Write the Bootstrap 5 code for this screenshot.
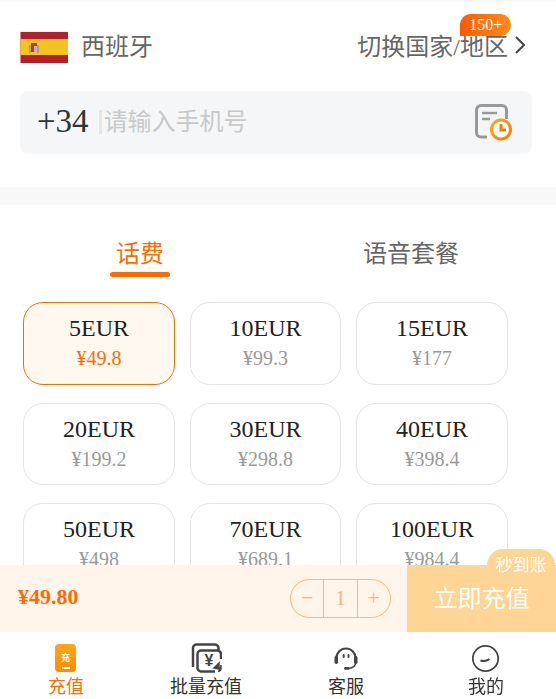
<!DOCTYPE html>
<html lang="zh-CN">
<head>
    <meta charset="UTF-8">
    <meta name="viewport" content="width=device-width, initial-scale=1.0">
    <title>话费充值</title>
    <link href="https://cdn.jsdelivr.net/npm/bootstrap@5.3.0/dist/css/bootstrap.min.css" rel="stylesheet">
    <style>
        html, body {
            height: 100%;
            overflow: hidden;
        }

        body {
            font-family: "Liberation Serif", "Noto Sans CJK SC", serif;
            background-color: #fff;
            color: #222;
            border-top: 2px solid #f8f8f8;
        }

        .top-row {
            height: 89px;
            padding: 0 31px 0 20px;
        }

        .flag-box {
            width: 48px;
            height: 33px;
            margin: 2px 13px 0 0;
        }

        .country-name, .switch-link {
            font-size: 24px;
            color: #666;
        }

        .switch-wrap {
            position: relative;
        }

        .chev-icon {
            margin: -4px 0 0 5px;
        }

        .count-tag {
            position: absolute;
            left: 103px;
            top: -14.5px;
            width: 51px;
            height: 22px;
            line-height: 22px;
            font-size: 16px;
            text-align: center;
            color: #fff;
            background: linear-gradient(90deg, #ff5a00, #ff8c1a);
            border-radius: 11px 11px 11px 0;
        }

        .phone-box {
            height: 63px;
            margin: 0 24px 0 20px;
            padding: 0 19px 0 17px;
            background-color: #f5f6f8;
            border-radius: 8px;
        }

        .phone-code {
            font-size: 33px;
            color: #333;
            margin-bottom: 2px;
        }

        .phone-sep {
            width: 3px;
            height: 24px;
            margin: 0 2px 2px 10px;
            background-color: #e6e6e6;
        }

        .phone-hint {
            font-size: 24px;
            color: #c8c8c8;
            margin-bottom: 2px;
        }

        .gap-band {
            height: 18px;
            margin-top: 33px;
            background-color: #f8f8f8;
        }

        .tab-row {
            padding-top: 31px;
        }

        .tab-item {
            font-size: 24px;
            line-height: 36px;
            color: #666;
            width: 271px;
            text-align: center;
        }

        .tab-on {
            color: #ff6a00;
            margin-left: 4.5px;
        }

        .tab-on::after {
            content: "";
            display: block;
            width: 60px;
            height: 5px;
            margin: 0 auto;
            background-color: #ff6a00;
            border-radius: 3px;
        }

        .price-grid {
            display: grid;
            grid-template-columns: 152px 151px 152px;
            grid-auto-rows: 82.5px;
            column-gap: 15px;
            row-gap: 18px;
            margin: 25px 0 0 23px;
        }

        .price-cell {
            border: 1px solid #e4e4e4;
            border-radius: 20px;
            text-align: center;
            padding-top: 9px;
        }

        .price-cell .amt {
            font-size: 24px;
            line-height: 32px;
            color: #222;
        }

        .price-cell .cny {
            font-size: 20px;
            line-height: 29px;
            color: #999;
        }

        .price-on {
            border-color: #ff6a00;
            background-color: #fff8ee;
        }

        .price-on .cny {
            color: #ff6a00;
        }

        .dock {
            position: fixed;
            left: 0;
            right: 0;
            bottom: 0;
        }

        .buy-bar {
            height: 67px;
            background-color: #fff5ea;
        }

        .buy-total {
            font-size: 22px;
            font-weight: 700;
            color: #ff6a00;
            padding: 0 0 4px 18px;
        }

        .stepper {
            width: 101px;
            height: 39px;
            margin-right: 16px;
            border: 1px solid #ffb27a;
            border-radius: 20px;
            color: #ffb27a;
            font-size: 22px;
        }

        .stepper span {
            flex: 1;
            text-align: center;
            line-height: 36px;
        }

        .stepper span:nth-child(2) {
            border-left: 1px solid #ffb27a;
            border-right: 1px solid #ffb27a;
        }

        .buy-btn {
            width: 149px;
            position: relative;
            padding: 0 0 4px;
            background-color: #ffd596;
            color: #fff;
            font-size: 24px;
            border: 0;
            font-family: "Noto Sans CJK SC", sans-serif;
        }

        .fast-tag {
            position: absolute;
            right: 1px;
            top: -16px;
            width: 68px;
            height: 30px;
            padding-top: 3px;
            font-size: 17px;
            line-height: 24px;
            text-align: center;
            color: #fff;
            background-color: #ffd596;
            border-radius: 16px 16px 0 0;
        }

        .tab-dock {
            height: 67px;
            margin-left: -4px;
            background-color: #fff;
        }

        .dock-item {
            width: 140px;
            flex: none;
            font-size: 18px;
            line-height: 24px;
            color: #333;
            text-align: center;
        }

        .dock-item svg {
            display: block;
            height: 30px;
            margin: 11px auto 2px;
        }

        .dock-on {
            color: #ff6a00;
        }
    </style>
</head>
<body>
    <!-- Pays -->
    <div class="top-row d-flex align-items-center justify-content-between">
        <div class="d-flex align-items-center">
            <svg class="flag-box" viewBox="0 0 48 33">
                <rect width="48" height="33" fill="#f8f8f8"/>
                <rect x="0.500" y="1" width="47.500" height="31" fill="#b41f2b"/>
                <rect x="0.500" y="8" width="47.500" height="16" fill="#f3c31f"/>
                <rect x="9" y="14" width="2" height="8" fill="#a9a08c"/>
                <rect x="17" y="14" width="2" height="8" fill="#a9a08c"/>
                <rect x="11" y="12" width="6" height="3" fill="#b5402a"/>
                <rect x="11" y="15" width="3" height="6" fill="#b5402a"/>
                <rect x="14" y="15" width="3" height="6" fill="#d9a7b5"/>
            </svg>
            <span class="country-name">西班牙</span>
        </div>
        <div class="switch-wrap d-flex align-items-center">
            <span class="count-tag">150+</span>
            <span class="switch-link">切换国家/地区</span>
            <svg class="chev-icon" width="12" height="20" viewBox="0 0 12 20">
                <path d="M3 2l8 8-8 8" fill="none" stroke="#444" stroke-width="2"/>
            </svg>
        </div>
    </div>

    <!-- Numéro -->
    <div class="phone-box d-flex align-items-center">
        <span class="phone-code">+34</span>
        <span class="phone-sep"></span>
        <span class="phone-hint flex-grow-1">请输入手机号</span>
        <svg width="38" height="38" viewBox="0 0 38 38">
            <defs><linearGradient id="clockG" x1="0" y1="0" x2="1" y2="1"><stop offset="0" stop-color="#ffa726"/><stop offset="1" stop-color="#ff7a00"/></linearGradient></defs>
            <path d="M12 33H6a4.500 4.500 0 0 1-4.500-4.500V6A4.500 4.500 0 0 1 6 1.500h21A4.500 4.500 0 0 1 31.500 6v9" fill="none" stroke="#999" stroke-width="3"/>
            <path d="M7 9h15M7 15h8" stroke="#999" stroke-width="2.500"/>
            <circle cx="26" cy="25.500" r="9.500" fill="#fff" stroke="url(#clockG)" stroke-width="3"/>
            <path d="M26 20v6h5" fill="none" stroke="#ff7a00" stroke-width="3"/>
        </svg>
    </div>

    <div class="gap-band"></div>

    <!-- Onglets -->
    <div class="tab-row d-flex">
        <div class="tab-item tab-on">话费</div>
        <div class="tab-item">语音套餐</div>
    </div>

    <!-- Montants -->
    <div class="price-grid">
        <div class="price-cell price-on"><div class="amt">5EUR</div><div class="cny">¥49.8</div></div>
        <div class="price-cell"><div class="amt">10EUR</div><div class="cny">¥99.3</div></div>
        <div class="price-cell"><div class="amt">15EUR</div><div class="cny">¥177</div></div>
        <div class="price-cell"><div class="amt">20EUR</div><div class="cny">¥199.2</div></div>
        <div class="price-cell"><div class="amt">30EUR</div><div class="cny">¥298.8</div></div>
        <div class="price-cell"><div class="amt">40EUR</div><div class="cny">¥398.4</div></div>
        <div class="price-cell"><div class="amt">50EUR</div><div class="cny">¥498</div></div>
        <div class="price-cell"><div class="amt">70EUR</div><div class="cny">¥689.1</div></div>
        <div class="price-cell"><div class="amt">100EUR</div><div class="cny">¥984.4</div></div>
    </div>

    <div class="dock">
        <div class="buy-bar d-flex align-items-stretch">
            <div class="buy-total flex-grow-1 d-flex align-items-center">¥49.80</div>
            <div class="d-flex align-items-center">
                <div class="stepper d-flex">
                    <span>−</span><span>1</span><span>+</span>
                </div>
            </div>
            <button class="buy-btn" type="button">
                <span class="fast-tag">秒到账</span>
                立即充值
            </button>
        </div>
        <div class="tab-dock d-flex">
            <div class="dock-item dock-on">
                <svg width="22" height="30" viewBox="0 0 22 30">
                    <defs><linearGradient id="orangeG" x1="0" y1="0" x2="0" y2="1"><stop offset="0" stop-color="#ffa61a"/><stop offset="1" stop-color="#ff8a00"/></linearGradient></defs>
                    <rect width="21" height="28" y="1" rx="4" fill="url(#orangeG)"/>
                    <text x="10.500" y="18" font-size="9" font-weight="700" fill="#fff" text-anchor="middle">充</text>
                    <rect x="7" y="24" width="8" height="2" fill="#fff"/>
                </svg>
                充值
            </div>
            <div class="dock-item">
                <svg width="32" height="30" viewBox="0 0 32 30">
                    <path d="M3 24V5a3.500 3.500 0 0 1 3.500-3.500H25A3.500 3.500 0 0 1 28.500 5v2" fill="none" stroke="#444" stroke-width="2.500"/>
                    <path d="M25 28.500H11a3.500 3.500 0 0 1-3.500-3.500V11A3.500 3.500 0 0 1 11 7.500h16.500A3.500 3.500 0 0 1 31 11v5" fill="none" stroke="#444" stroke-width="2.500"/>
                    <path d="M31 22v3a3.500 3.500 0 0 1-3 3.500M24 25l5-5v6z" fill="#444" stroke="#444" stroke-width="1.500"/>
                    <text x="19" y="23" font-family="Liberation Sans, sans-serif" font-size="16" font-weight="700" fill="#444" text-anchor="middle">¥</text>
                </svg>
                批量充值
            </div>
            <div class="dock-item">
                <svg width="24" height="30" viewBox="0 -4 24 30">
                    <path d="M2.500 12V11a9.500 9.500 0 0 1 19 0v1" fill="none" stroke="#444" stroke-width="2.200"/>
                    <rect x="0.500" y="9" width="3.500" height="8" rx="1.700" fill="#444"/>
                    <rect x="20" y="9" width="3.500" height="8" rx="1.700" fill="#444"/>
                    <path d="M21.500 16c0 3-3 5-7 5.500" fill="none" stroke="#444" stroke-width="1.600"/>
                    <rect x="10" y="20" width="5.500" height="2.800" rx="1.400" fill="#444"/>
                    <rect x="8.700" y="7" width="2" height="4" rx="1" fill="#444"/>
                    <rect x="13.500" y="7" width="2" height="4" rx="1" fill="#444"/>
                </svg>
                客服
            </div>
            <div class="dock-item">
                <svg width="28" height="30" viewBox="0 0 28 30">
                    <circle cx="13.500" cy="15.500" r="12.700" fill="none" stroke="#444" stroke-width="1.800"/>
                    <path d="M8.500 17.500c3.500 1 6.500 .5 9-1.500" fill="none" stroke="#444" stroke-width="2"/>
                </svg>
                我的
            </div>
        </div>
    </div>

    <script src="https://cdn.jsdelivr.net/npm/bootstrap@5.3.0/dist/js/bootstrap.bundle.min.js"></script>
</body>
</html>
